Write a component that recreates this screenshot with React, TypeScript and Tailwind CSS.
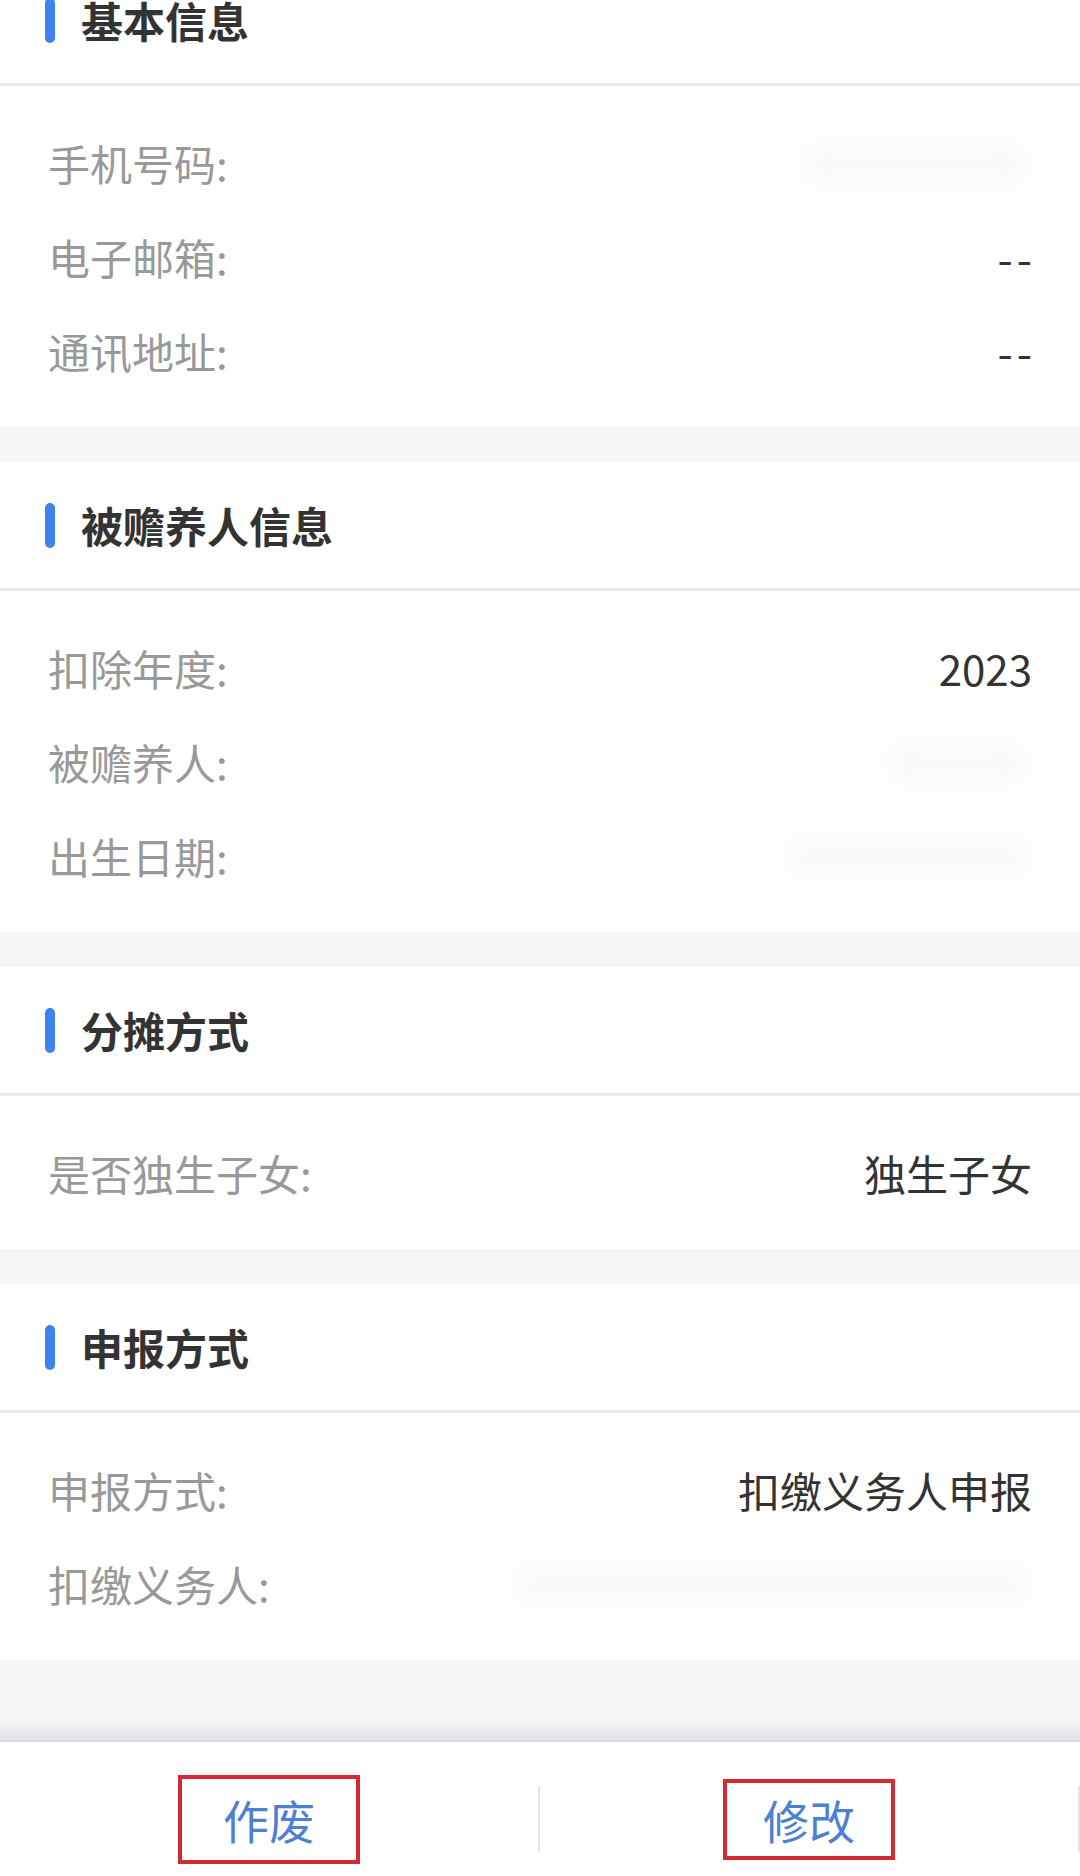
import React from 'react';

type Row = {
  label: string;
  value?: string;
  blur?: string; // 打码区域的宽度
};

type SectionData = {
  title: string;
  rows: Row[];
};

const sections: SectionData[] = [
  {
    title: '基本信息',
    rows: [
      { label: '手机号码:', blur: 'w-[236px]' },
      { label: '电子邮箱:', value: '--' },
      { label: '通讯地址:', value: '--' },
    ],
  },
  {
    title: '被赡养人信息',
    rows: [
      { label: '扣除年度:', value: '2023' },
      { label: '被赡养人:', blur: 'w-[150px]' },
      { label: '出生日期:', blur: 'w-[250px]' },
    ],
  },
  {
    title: '分摊方式',
    rows: [{ label: '是否独生子女:', value: '独生子女' }],
  },
  {
    title: '申报方式',
    rows: [
      { label: '申报方式:', value: '扣缴义务人申报' },
      { label: '扣缴义务人:', blur: 'w-[520px]' },
    ],
  },
];

const Section = ({ title, rows }: SectionData) => {
  return (
    <section className="bg-white">
      <div className="h-[126px] flex items-center pl-[45px]">
        <span className="w-[10px] h-[45px] rounded-full bg-[#3f83f0]" />
        <h2 className="ml-[26px] text-[42px] leading-none font-bold text-[#333333]">{title}</h2>
      </div>
      <div className="h-[3px] bg-[#ebebeb]" />
      <div className="pt-[30px] pb-[29px] px-[48px]">
        {rows.map((row) => (
          <div key={row.label} className="h-[94px] flex items-center justify-between">
            <span className="text-[42px] leading-none text-[#999999]">{row.label}</span>
            {row.value === '--' ? (
              <span className="text-[44px] leading-none tracking-[4px] -mr-[4px] text-[#333333]">{row.value}</span>
            ) : row.value ? (
              <span className="text-[42px] leading-none text-[#333333]">{row.value}</span>
            ) : (
              // 原图此处为打码内容
              <span className={`${row.blur} h-[52px] rounded-full bg-[#fafafa] blur-[8px]`} />
            )}
          </div>
        ))}
      </div>
    </section>
  );
};

export default function App() {
  return (
    <div className="w-[1080px] h-[1876px] overflow-hidden flex flex-col bg-[#f5f6f8] font-['Noto_Sans_CJK_SC','Noto_Sans',sans-serif]">
      <div className="-mt-[43px] flex flex-col gap-[35px]">
        {sections.map((s) => (
          <Section key={s.title} title={s.title} rows={s.rows} />
        ))}
      </div>

      <div className="flex-1 flex flex-col justify-end">
        <div className="h-[22px] bg-linear-to-b from-[#f5f6f8] to-[#e2e3e6]" />
      </div>

      {/* 底部操作栏 */}
      <div className="h-[136px] bg-white border-t-2 border-[#d9d9db] flex pt-[20px]">
        <div className="w-[538px] flex items-center justify-center">
          <button className="w-[182px] h-[89px] border-4 border-[#d22a33] flex items-center justify-center text-[46px] leading-none text-[#4b80d2]">
            作废
          </button>
        </div>
        <div className="w-[2px] h-[66px] self-center bg-[#e4e4e4]" />
        <div className="w-[538px] flex items-center justify-center">
          <button className="w-[172px] h-[81px] border-4 border-[#d22a33] flex items-center justify-center text-[46px] leading-none text-[#4b80d2]">
            修改
          </button>
        </div>
        <div className="w-[2px] h-[66px] self-center bg-[#e4e4e4]" />
      </div>
    </div>
  );
}
